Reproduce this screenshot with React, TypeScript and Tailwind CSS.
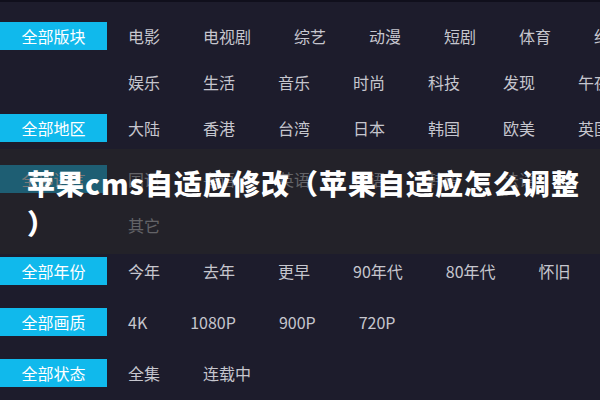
const groups: { label: string; lines: string[][] }[] = [
  {
    label: '全部版块',
    lines: [
      ['电影', '电视剧', '综艺', '动漫', '短剧', '体育', '纪录片'],
      ['娱乐', '生活', '音乐', '时尚', '科技', '发现', '午夜'],
    ],
  },
  { label: '全部地区', lines: [['大陆', '香港', '台湾', '日本', '韩国', '欧美', '英国']] },
  {
    label: '全部语言',
    lines: [['国语', '粤语', '英语', '日语', '韩语', '法语'], ['其它']],
  },
  { label: '全部年份', lines: [['今年', '去年', '更早', '90年代', '80年代', '怀旧']] },
  { label: '全部画质', lines: [['4K', '1080P', '900P', '720P']] },
  { label: '全部状态', lines: [['全集', '连载中']] },
];

export default function App() {
  return (
    <div
      className="relative w-[600px] h-[400px] overflow-hidden bg-[#1d1c2c] border-t-2 border-[#100f1c]"
      style={{ fontFamily: '"Noto Sans CJK SC", "Noto Sans", sans-serif' }}
    >
      {/* Filter groups */}
      <div className="pt-[20px]">
        {groups.map((g) => (
          <div key={g.label} className="flex items-start min-h-[51px] pb-[18px]">
            <div className="w-[107px] h-[28px] shrink-0 bg-[#10b9ec] text-white text-[16px] leading-[28px] text-center">
              {g.label}
            </div>
            <div className="ml-[21px] flex flex-col gap-y-[18px]">
              {g.lines.map((line, i) => (
                <div key={i} className="flex gap-x-[43px]">
                  {line.map((it) => (
                    <span key={it} className="text-[16px] leading-[28px] text-[#c6c6ce] whitespace-nowrap">
                      {it}
                    </span>
                  ))}
                </div>
              ))}
            </div>
          </div>
        ))}
      </div>

      {/* Title overlay */}
      <div className="absolute left-0 right-0 top-[147px] h-[105px] bg-[rgba(38,38,40,0.62)] pl-[27px] pr-[8px] pt-[14px]">
        <h1 className="text-white font-black text-[28px] leading-[40px] tracking-[1px] whitespace-nowrap">
          苹果cms自适应修改（苹果自适应怎么调整
          <br />）
        </h1>
      </div>
    </div>
  );
}
